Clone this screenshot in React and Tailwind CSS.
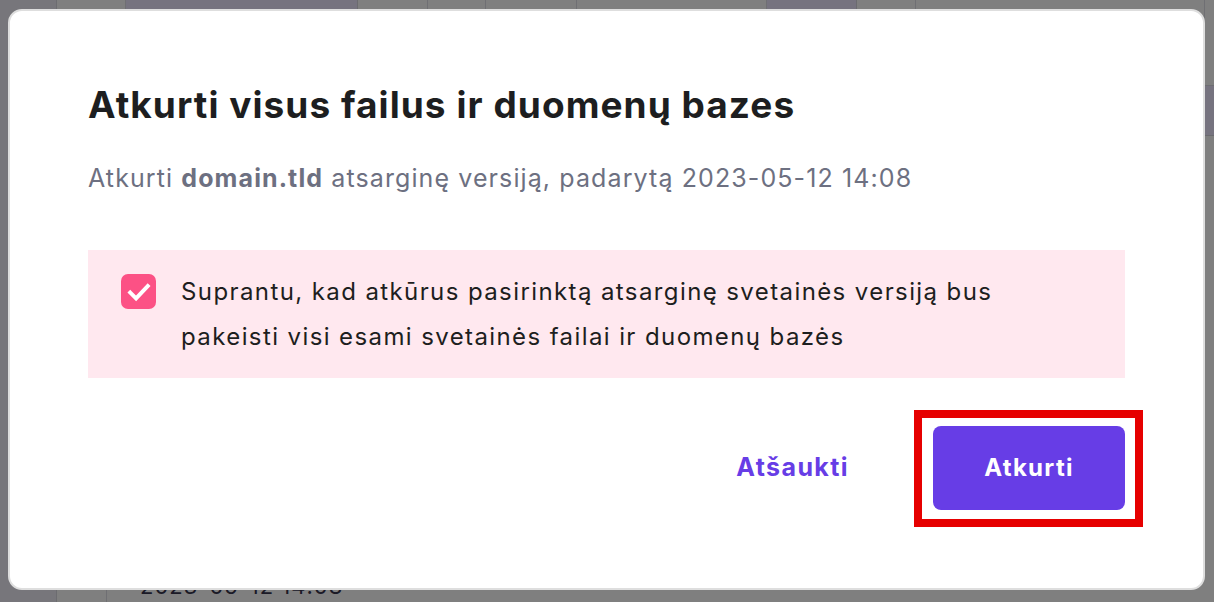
export default function App() {
  const topCols = [57, 69, 232, 70, 58, 91, 190, 90, 59, 289]

  return (
    <div className="relative h-screen w-full overflow-hidden bg-white font-['Inter','DejaVu_Sans',sans-serif]">
      {/* PAGE BEHIND */}
      <div className="flex h-full">
        <div className="w-[57px] h-full bg-[#eeedf6] border-r border-[#d8d8e0]" />
        <div className="flex-1 flex flex-col">
          <div className="flex h-[86px] border-b border-[#dcdce4]">
            {topCols.slice(1).map((w, i) => (
              <div
                key={i}
                className={
                  i === 1 || i === 6
                    ? 'h-full bg-[#ede6ff] border-r border-[#d6d6de]'
                    : 'h-full border-r border-[#dedee6]'
                }
                style={{ width: w }}
              />
            ))}
          </div>
          <div className="flex-1 flex justify-end">
            <div className="w-[10px] h-[50px] bg-[#ede6ff] border-b border-[#d6d6de]" />
          </div>
          <div className="flex h-[32px] items-center">
            <div className="w-[50px] h-full border-r border-[#dedee6]" />
            <span className="pl-[33px] text-[22px] text-[#36344d] tracking-[1px]">2023-05-12 14:08</span>
          </div>
        </div>
      </div>

      {/* OVERLAY */}
      <div className="fixed inset-0 bg-black/50 pl-[8px] pr-[9px] pt-[9px]">
        <div className="bg-white rounded-[14px] border-2 border-[#dedede] px-[78px] pt-[72px] pb-[78px]">
          <h1 className="text-[37px] leading-[44px] font-bold text-[#1d1e20] tracking-[1.05px]">
            Atkurti visus failus ir duomenų bazes
          </h1>

          <p className="mt-[35px] text-[25px] leading-[32px] text-[#6d7081] tracking-[1.1px]">
            Atkurti <b className="font-bold">domain.tld</b> atsarginę versiją, padarytą 2023-05-12 14:08
          </p>

          <div className="mt-[56px] bg-[#ffe8ef] flex gap-[25px] pl-[33px] pr-[60px] py-[19px]">
            <div className="mt-[5px] w-[35px] h-[35px] shrink-0 rounded-[7px] bg-[#fc5185] flex items-center justify-center">
              <svg viewBox="0 0 24 24" className="w-[28px] h-[28px]" fill="none">
                <path d="M4.5 12.5l5 5L19.5 7" stroke="white" strokeWidth="3.4" strokeLinecap="square" />
              </svg>
            </div>
            <p className="text-[24px] leading-[45px] text-[#1d1e20] tracking-[1.4px]">
              Suprantu, kad atkūrus pasirinktą atsarginę svetainės versiją bus pakeisti visi esami svetainės failai ir duomenų bazės
            </p>
          </div>

          <div className="mt-[48px] flex justify-end items-center gap-[60px]">
            <button className="px-[24px] h-[84px] text-[25px] font-bold text-[#673de6] tracking-[1.4px]">
              Atšaukti
            </button>
            <div className="relative">
              <button className="w-[192px] h-[84px] rounded-[8px] bg-[#673de6] text-white text-[24px] font-bold tracking-[1.3px]">
                Atkurti
              </button>
              <div className="absolute -left-[19px] -right-[18px] -top-[16px] -bottom-[17px] border-[8px] border-[#e60000] pointer-events-none" />
            </div>
          </div>
        </div>
      </div>
    </div>
  )
}
